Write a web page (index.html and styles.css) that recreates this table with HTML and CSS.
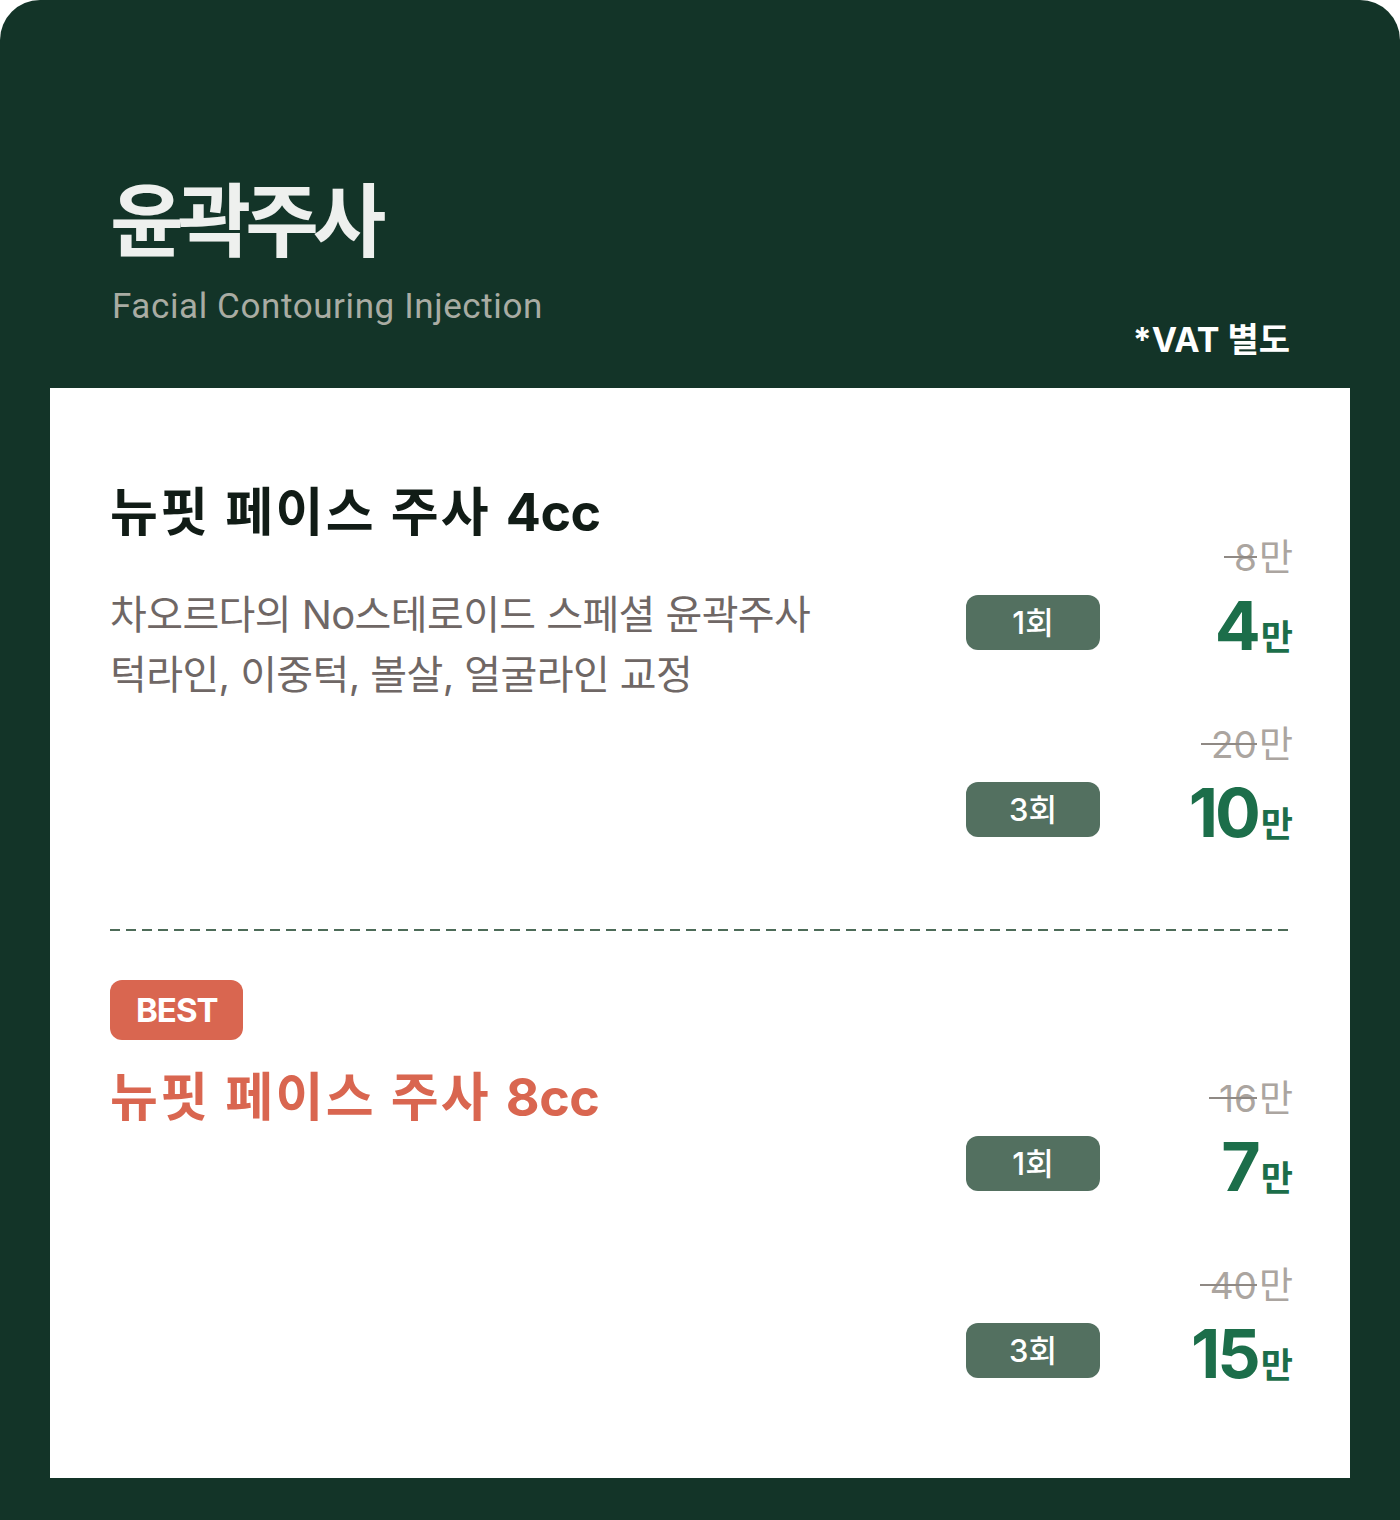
FILE: index.html
```html
<!DOCTYPE html>
<html lang="ko">
<head>
    <meta charset="UTF-8">
    <meta name="viewport" content="width=device-width, initial-scale=1.0">
    <title>윤곽주사</title>
    <link rel="stylesheet" href="styles.css">
</head>
<body>
    <div class="page">
        <header class="head">
            <div>
                <h1 class="title">윤곽주사</h1>
                <p class="subtitle">Facial Contouring Injection</p>
            </div>
            <p class="vat">*VAT 별도</p>
        </header>

        <section class="card">
            <article class="item">
                <div class="info">
                    <h2 class="name">뉴핏 페이스 주사 <span class="cc">4cc</span></h2>
                    <p class="desc">차오르다의 No스테로이드 스페셜 윤곽주사<br>턱라인, 이중턱, 볼살, 얼굴라인 교정</p>
                </div>
                <ul class="prices">
                    <li class="price">
                        <div class="old"><s>8</s>만</div>
                        <div class="now-line">
                            <span class="count">1회</span>
                            <span class="now"><b>4</b>만</span>
                        </div>
                    </li>
                    <li class="price">
                        <div class="old"><s>20</s>만</div>
                        <div class="now-line">
                            <span class="count">3회</span>
                            <span class="now"><b>10</b>만</span>
                        </div>
                    </li>
                </ul>
            </article>

            <hr class="divider">

            <article class="item best">
                <div class="info">
                    <span class="tag">BEST</span>
                    <h2 class="name">뉴핏 페이스 주사 <span class="cc">8cc</span></h2>
                </div>
                <ul class="prices">
                    <li class="price">
                        <div class="old"><s>16</s>만</div>
                        <div class="now-line">
                            <span class="count">1회</span>
                            <span class="now"><b>7</b>만</span>
                        </div>
                    </li>
                    <li class="price">
                        <div class="old"><s>40</s>만</div>
                        <div class="now-line">
                            <span class="count">3회</span>
                            <span class="now"><b>15</b>만</span>
                        </div>
                    </li>
                </ul>
            </article>
        </section>
    </div>
</body>
</html>
```

FILE: styles.css
```css
body {
    margin: 0;
    background: #ffffff;
    font-family: Inter, "Noto Sans CJK KR", sans-serif;
}
.page {
    width: 1400px;
    height: 1520px;
    box-sizing: border-box;
    padding-bottom: 42px;
    background: #133428;
    border-radius: 40px 40px 0 0;
    display: flex;
    flex-direction: column;
}
.head {
    display: flex;
    justify-content: space-between;
    align-items: flex-start;
    padding: 173px 110px 28px 110px;
}
.title {
    margin: 0;
    color: #eef0ee;
    font-size: 80px;
    font-weight: 700;
    line-height: 96px;
    letter-spacing: -6px;
}
.subtitle {
    margin: 17px 0 0 2px;
    color: #a9aca3;
    font-family: Roboto, sans-serif;
    font-size: 35px;
    line-height: 41px;
    letter-spacing: 0.6px;
}
.vat {
    margin: 146px 0 0 0;
    color: #ffffff;
    font-size: 34px;
    font-weight: 700;
    line-height: 41px;
}
.card {
    flex: 1;
    margin: 0 50px;
    padding: 0 57px 0 60px;
    background: #ffffff;
}
.item {
    display: flex;
    justify-content: space-between;
    align-items: flex-start;
}
.item:first-child {
    padding-top: 91px;
}
.name {
    margin: 0;
    color: #111c16;
    font-size: 52px;
    font-weight: 700;
    line-height: 68px;
    letter-spacing: 2.4px;
}
.name .cc {
    letter-spacing: -0.5px;
}
.desc {
    margin: 38px 0 0 0;
    color: #6f6765;
    font-size: 40px;
    line-height: 60px;
    letter-spacing: -0.6px;
}
.prices {
    list-style: none;
    margin: 59px 0 0 0;
    padding: 0;
    width: 327px;
}
.price + .price {
    margin-top: 75px;
}
.old {
    text-align: right;
    color: #aba5a0;
    font-size: 37px;
    line-height: 40px;
}
.old s {
    position: relative;
    text-decoration: none;
    margin-right: 2px;
}
.old s::after {
    content: "";
    position: absolute;
    left: -10px;
    right: 0;
    top: 21px;
    height: 2px;
    background: #8f8984;
}
.now-line {
    display: flex;
    justify-content: space-between;
    align-items: flex-end;
    margin-top: 13px;
}
.count {
    width: 134px;
    height: 55px;
    border-radius: 12px;
    background: #537060;
    color: #ffffff;
    font-size: 31px;
    font-weight: 500;
    line-height: 55px;
    text-align: center;
}
.now {
    margin-bottom: -9px;
    color: #1c6e4a;
    font-size: 35px;
    font-weight: 700;
    line-height: 1;
}
.now b {
    font-size: 68px;
    font-weight: 700;
    letter-spacing: -3px;
    margin-right: 3px;
}
.divider {
    margin: 92px 0 49px 0;
    border: 0;
    height: 2px;
    background: repeating-linear-gradient(to right, #4d6b58 0 10px, transparent 10px 16px);
}
.tag {
    display: inline-block;
    height: 60px;
    padding: 0 25px 0 26px;
    border-radius: 12px;
    background: #d96650;
    color: #ffffff;
    font-size: 33px;
    font-weight: 700;
    line-height: 60px;
    letter-spacing: -1px;
}
.best .name {
    margin-top: 24px;
    color: #d96650;
}
.best .prices {
    margin-top: 99px;
}
```
